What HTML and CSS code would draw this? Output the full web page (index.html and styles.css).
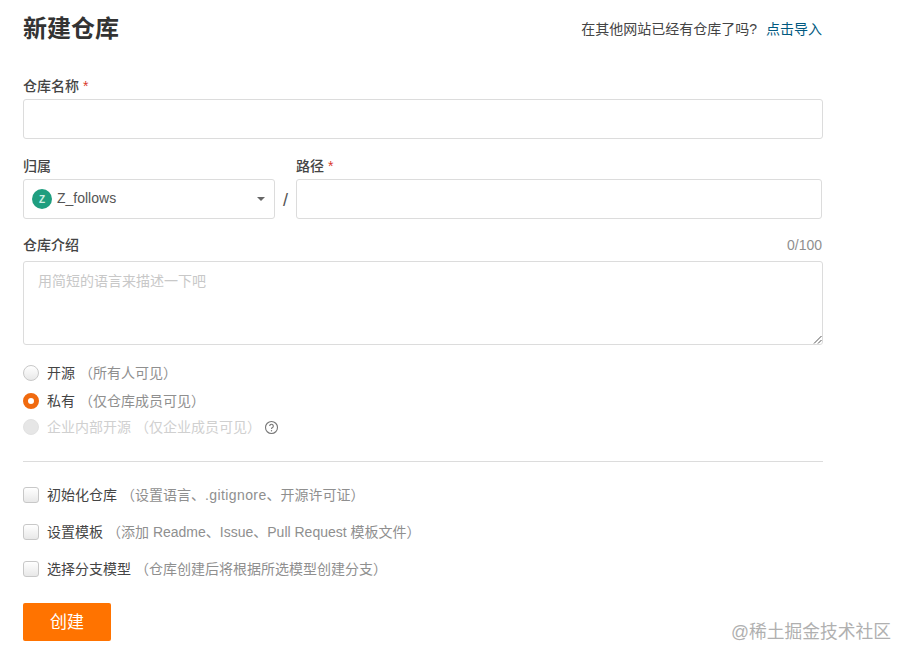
FILE: index.html
```html
<!DOCTYPE html>
<html lang="zh-CN">
<head>
<meta charset="utf-8">
<title>新建仓库</title>
<link rel="stylesheet" href="styles.css">
</head>
<body>
<main class="page">
  <header class="head">
    <h1 class="title">新建仓库</h1>
    <p class="import">在其他网站已经有仓库了吗?<a class="link" href="#">点击导入</a></p>
  </header>
  <form class="form">
    <div class="label label-name">仓库名称 <span class="req">*</span></div>
    <div class="input"></div>

    <div class="owner-row">
      <div class="owner">
        <div class="label">归属</div>
        <div class="select">
          <span class="avatar">Z</span>
          <span class="owner-name">Z_follows</span>
          <span class="caret"></span>
        </div>
      </div>
      <span class="slash">/</span>
      <div class="path">
        <div class="label">路径 <span class="req">*</span></div>
        <div class="input"></div>
      </div>
    </div>

    <div class="desc-head">
      <div class="label">仓库介绍</div>
      <span class="count">0/100</span>
    </div>
    <div class="textarea">
      用简短的语言来描述一下吧
      <svg class="grip" width="9" height="9" viewBox="0 0 9 9"><path d="M8.5 1 1 8.5M8.5 5 5 8.5" stroke="#555" stroke-width="1" fill="none"/></svg>
    </div>

    <div class="radios">
      <div class="opt opt-a"><span class="radio"></span><span class="name">开源</span><span class="hint">（所有人可见）</span></div>
      <div class="opt opt-b"><span class="radio on"></span><span class="name">私有</span><span class="hint">（仅仓库成员可见）</span></div>
      <div class="opt opt-c disabled"><span class="radio off"></span><span class="name">企业内部开源</span><span class="hint">（仅企业成员可见）</span>
        <svg class="help" width="15" height="15" viewBox="0 0 15 15"><circle cx="7.5" cy="7.5" r="6" fill="none" stroke="#777" stroke-width="1.1"/><path d="M5.7 6a1.8 1.8 0 1 1 2.8 1.5c-.7.4-1 .8-1 1.4" fill="none" stroke="#777" stroke-width="1.1"/><circle cx="7.5" cy="10.8" r=".7" fill="#777"/></svg>
      </div>
    </div>

    <hr class="rule">

    <div class="checks">
      <div class="opt"><span class="check"></span><span class="name">初始化仓库</span><span class="hint">（设置语言、<span class="latin">.gitignore</span>、开源许可证）</span></div>
      <div class="opt"><span class="check"></span><span class="name">设置模板</span><span class="hint">（添加 Readme、Issue、Pull Request 模板文件）</span></div>
      <div class="opt"><span class="check"></span><span class="name">选择分支模型</span><span class="hint">（仓库创建后将根据所选模型创建分支）</span></div>
    </div>

    <button class="submit" type="button">创建</button>
  </form>
</main>
<div class="watermark">@稀土掘金技术社区</div>
</body>
</html>
```
FILE: styles.css
```css
* { box-sizing: border-box; }
html, body { margin: 0; padding: 0; height: 100%; }
body {
  background: #fff;
  color: #444;
  font-family: "Liberation Sans", "Noto Sans CJK SC", sans-serif;
  font-size: 14px;
  overflow: hidden;
  position: relative;
}
.page { width: 800px; margin-left: 23px; }
.head { display: flex; justify-content: space-between; align-items: center; height: 58px; }
.title { margin: 0; font-size: 24px; line-height: 30px; font-weight: 700; color: #333; }
.import { margin: 0; font-size: 14px; line-height: 18px; color: #444; }
.link { color: #005980; text-decoration: none; margin-left: 9px; margin-right: 1px; }
.label { font-size: 14px; line-height: 18px; color: #444; font-weight: 500; height: 18px; }
.label-name { margin-top: 19px; margin-bottom: 4px; }
.req { color: #d9392c; }
.input { height: 40px; border: 1px solid #dcdcdc; border-radius: 3px; background: #fff; }
.owner-row { display: flex; margin-top: 18px; }
.owner { width: 252px; }
.owner .label, .path .label { margin-bottom: 4px; }
.select { height: 40px; border: 1px solid #dcdcdc; border-radius: 3px; display: flex; align-items: center; padding: 0 9px 0 8px; }
.avatar { width: 20px; height: 20px; border-radius: 50%; background: #1f9e7f; color: #cfeee5; font-size: 10px; font-weight: 700; display: flex; align-items: center; justify-content: center; }
.owner-name { margin-left: 5px; font-size: 14px; line-height: 18px; color: #555; flex: 1; transform: translateY(-1px); }
.caret { width: 0; height: 0; border-left: 4px solid transparent; border-right: 4px solid transparent; border-top: 4px solid #666; }
.slash { width: 21px; font-size: 18px; color: #555; text-align: center; padding-top: 31px; line-height: 24px; }
.path { width: 526px; }
.desc-head { display: flex; justify-content: space-between; align-items: center; margin-top: 17px; height: 18px; margin-bottom: 7px; }
.count { font-size: 14px; color: #8f8f8f; margin-right: 1px; }
.textarea { position: relative; height: 84px; border: 1px solid #dcdcdc; border-radius: 3px; padding: 9px 14px; line-height: 20px; font-size: 14px; color: #c8c8c8; }
.grip { position: absolute; right: 0; bottom: 0; }
.radios { margin-top: 18px; }
.opt { display: flex; align-items: center; height: 20px; line-height: 18px; color: #444; }
.opt-b { margin-top: 8px; }
.opt-c { margin-top: 6px; }
.name { font-size: 14px; margin-left: 8px; }
.hint { font-size: 14px; color: #8f8f8f; margin-left: 4px; }
.latin { letter-spacing: .4px; }
.disabled .name, .disabled .hint { color: #d0d0d0; }
.radio { width: 16px; height: 16px; border-radius: 50%; border: 1px solid #c8c8c8; background: linear-gradient(#fff, #e8e8e8); flex: none; }
.radio.on { border: 5px solid #f06a0f; background: #fff; }
.radio.off { background: #e6e6e6; border-color: #e2e2e2; }
.help { margin-left: 3px; }
.rule { border: 0; border-top: 1px solid #dcdcdc; margin: 24px 0 0; }
.checks { margin-top: 23px; display: flex; flex-direction: column; gap: 17px; }
.check { width: 16px; height: 16px; border-radius: 3px; border: 1px solid #c8c8c8; background: linear-gradient(#fff, #e8e8e8); flex: none; }
.submit { display: block; margin-top: 24px; padding: 0 0 3px; width: 88px; height: 38px; border: 0; border-radius: 2px; background: #ff7300; color: #fff; font: 17px "Liberation Sans", "Noto Sans CJK SC", sans-serif; }
.watermark { position: absolute; left: 731px; top: 620px; font-size: 17.75px; line-height: 24px; color: #b0b0b0; white-space: nowrap; }
```
